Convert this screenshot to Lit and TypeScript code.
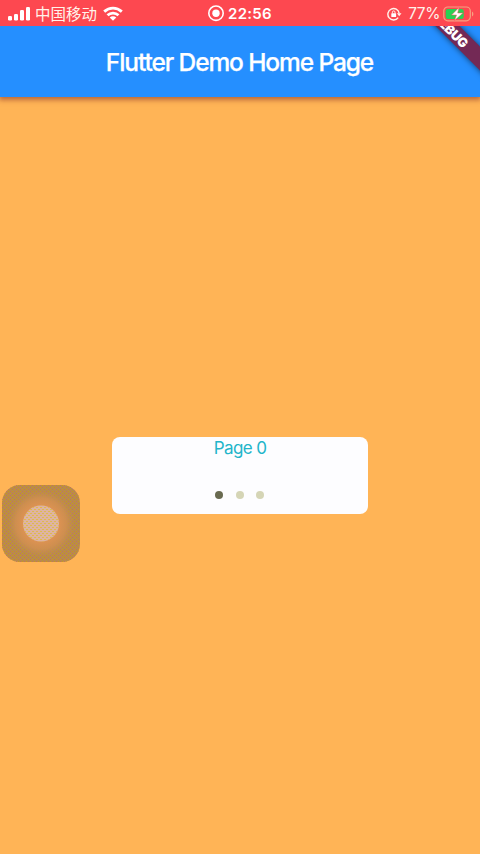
import { LitElement, html, css } from "lit";
import { customElement } from "lit/decorators.js";

@customElement("app-root")
export class AppRoot extends LitElement {
  static styles = css`
    :host {
      display: flex;
      flex-direction: column;
      position: relative;
      width: 480px;
      height: 854px;
      overflow: hidden;
      background: #ffb456;
      color: #fff;
      font-family: Inter, "Noto Sans CJK SC", sans-serif;
    }
    svg { display: block; flex: none; }
    .status {
      flex: none;
      height: 26px;
      box-sizing: border-box;
      display: grid;
      grid-template-columns: 1fr auto 1fr;
      align-items: center;
      padding: 0 8px;
      background: #fd4850;
      position: relative;
      z-index: 2;
      color: #fff3ea;
      font-size: 15.5px;
      line-height: 26px;
      white-space: nowrap;
    }
    .side { display: flex; align-items: center; }
    .carrier { margin: 0 6px 0 5px; font-family: "Noto Sans CJK SC", sans-serif; line-height: 25px; height: 26px; }
    .clock { font-weight: 600; color: #fff; margin-left: 3px; letter-spacing: 0.3px; font-size: 15px; }
    .right { justify-content: flex-end; margin-right: -2px; }
    .percent { margin: 0 3px 0 6px; font-size: 15.5px; letter-spacing: -0.4px; line-height: 27px; }
    .bar {
      flex: none;
      height: 71px;
      display: flex;
      align-items: center;
      justify-content: center;
      background: #258fff;
      box-shadow: 0 2px 5px 1px rgba(150, 65, 45, 0.65);
      position: relative;
      z-index: 1;
    }
    .title { margin: 0 1px 0 0; font-size: 24.5px; line-height: 30px; font-weight: 500; letter-spacing: -1.1px; white-space: nowrap; -webkit-text-stroke: 0.25px #fff; }
    .clip { position: absolute; inset: 0; overflow: hidden; }
    .ribbon {
      position: absolute;
      left: 390.5px;
      top: -5px;
      width: 120px;
      height: 17px;
      transform: rotate(45deg);
      background: #732955;
      box-shadow: 0 0 6px rgba(0, 0, 0, 0.6);
      text-align: center;
      font-size: 13px;
      line-height: 18px;
      font-weight: 900;
      letter-spacing: -0.4px;
    }
    .body { flex: 1; display: flex; align-items: center; justify-content: center; }
    .card {
      width: 256px;
      height: 77px;
      border-radius: 8px;
      background: #fdfdff;
      display: flex;
      flex-direction: column;
      align-items: center;
      justify-content: space-between;
    }
    .page { color: #22b5ca; font-size: 17px; line-height: 22px; letter-spacing: -0.6px; }
    .dots { display: flex; gap: 12.5px; margin: 0 1px 15px 0; }
    .dot { width: 8px; height: 8px; border-radius: 50%; background: #d5d5b6; }
    .dot.active { background: #696a50; }
    .assist {
      position: absolute;
      left: 2px;
      top: 485px;
    }
  `;

  render() {
    return html`
      <div class="status">
        <div class="side">
          <svg width="22" height="14" viewBox="0 0 22 14" fill="#fff">
            <rect x="0" y="9" width="4" height="4.5" rx="1.2" />
            <rect x="6" y="7" width="4" height="6.5" rx="1.2" />
            <rect x="12" y="3" width="4" height="10.5" rx="1.2" />
            <rect x="18" y="0" width="4" height="13.5" rx="1.2" />
          </svg>
          <span class="carrier">中国移动</span>
          <svg width="20" height="15" viewBox="0 0 20 15" fill="none" stroke="#fff" stroke-width="2.8">
            <path d="M1.2 5.6C6.3.9 13.7.9 18.8 5.6" />
            <path d="M4.5 9.2c3.1-2.9 7.9-2.9 11 0" />
            <path d="M10 14.7 6.7 11.4c1.9-1.6 4.7-1.6 6.6 0z" fill="#fff" stroke="none" />
          </svg>
        </div>
        <div class="side">
          <svg width="17" height="17" viewBox="0 0 17 17">
            <circle cx="8" cy="8.2" r="7.2" fill="none" stroke="#fff" stroke-width="1.6" />
            <circle cx="8" cy="8.2" r="3.7" fill="#fff" />
          </svg>
          <span class="clock">22:56</span>
        </div>
        <div class="side right">
          <svg width="15" height="14" viewBox="0 0 15 14" fill="none" stroke="#fff3ea" stroke-width="1.4">
            <path d="M11.2 10.6A5.7 5.7 0 1 1 12.2 6.3" />
            <path d="M9.9 6.3h4.6l-2.3 3z" fill="#fff3ea" stroke="none" />
            <rect x="4.3" y="6.3" width="4.8" height="3.6" rx=".5" fill="#fff" stroke="none" />
            <path d="M5.4 6.5V5.2a1.3 1.3 0 0 1 2.6 0v1.3" stroke-width="1" />
          </svg>
          <span class="percent">77%</span>
          <svg width="31" height="16" viewBox="0 0 31 16">
            <rect x=".8" y="1" width="26.5" height="13.8" rx="4" fill="none" stroke="#f6a181" stroke-width="1.2" />
            <path d="M29 5.5c1.8.8 1.8 4.2 0 5z" fill="#f6a181" />
            <rect x="2.7" y="3" width="18" height="10" rx="2.2" fill="#29d153" />
            <path d="M16 1.5 8.5 9h5l-2 5.5L20 7h-5.3z" fill="#fff" stroke="#fd4850" stroke-width=".5" />
          </svg>
        </div>
      </div>
      <header class="bar">
        <h1 class="title">Flutter Demo Home Page</h1>
        <div class="clip"><div class="ribbon">DEBUG</div></div>
      </header>
      <main class="body">
        <section class="card">
          <div class="page">Page 0</div>
          <div class="dots">
            <i class="dot active"></i><i class="dot"></i><i class="dot"></i>
          </div>
        </section>
      </main>
      <svg class="assist" width="78" height="77" viewBox="0 0 78 77">
        <defs>
          <pattern id="weave" width="4" height="4" patternUnits="userSpaceOnUse">
            <path d="M0 0h1v1H0zM2 2h1v1H2z" fill="#c99a18" />
            <path d="M2 0h1v1H2zM0 2h1v1H0z" fill="#c5745a" />
          </pattern>
          <pattern id="mesh" width="4" height="4" patternUnits="userSpaceOnUse">
            <path d="M0 0h2v1H0zM2 2h2v1H2z" fill="#dfb94f" />
          </pattern>
          <radialGradient id="glow" gradientUnits="userSpaceOnUse" cx="39" cy="38.5" r="34">
            <stop offset=".55" stop-color="#db9252" />
            <stop offset=".75" stop-color="#d08f50" stop-opacity=".9" />
            <stop offset="1" stop-color="#c08b4e" stop-opacity="0" />
          </radialGradient>
        </defs>
        <rect width="78" height="77" rx="18" fill="#b88b4c" />
        <rect width="78" height="77" rx="18" fill="url(#weave)" />
        <circle cx="39" cy="38.5" r="34" fill="url(#glow)" />
        <circle cx="39" cy="38.5" r="18" fill="#deb4a2" />
        <circle cx="39" cy="38.5" r="18" fill="url(#mesh)" />
      </svg>
    `;
  }
}
